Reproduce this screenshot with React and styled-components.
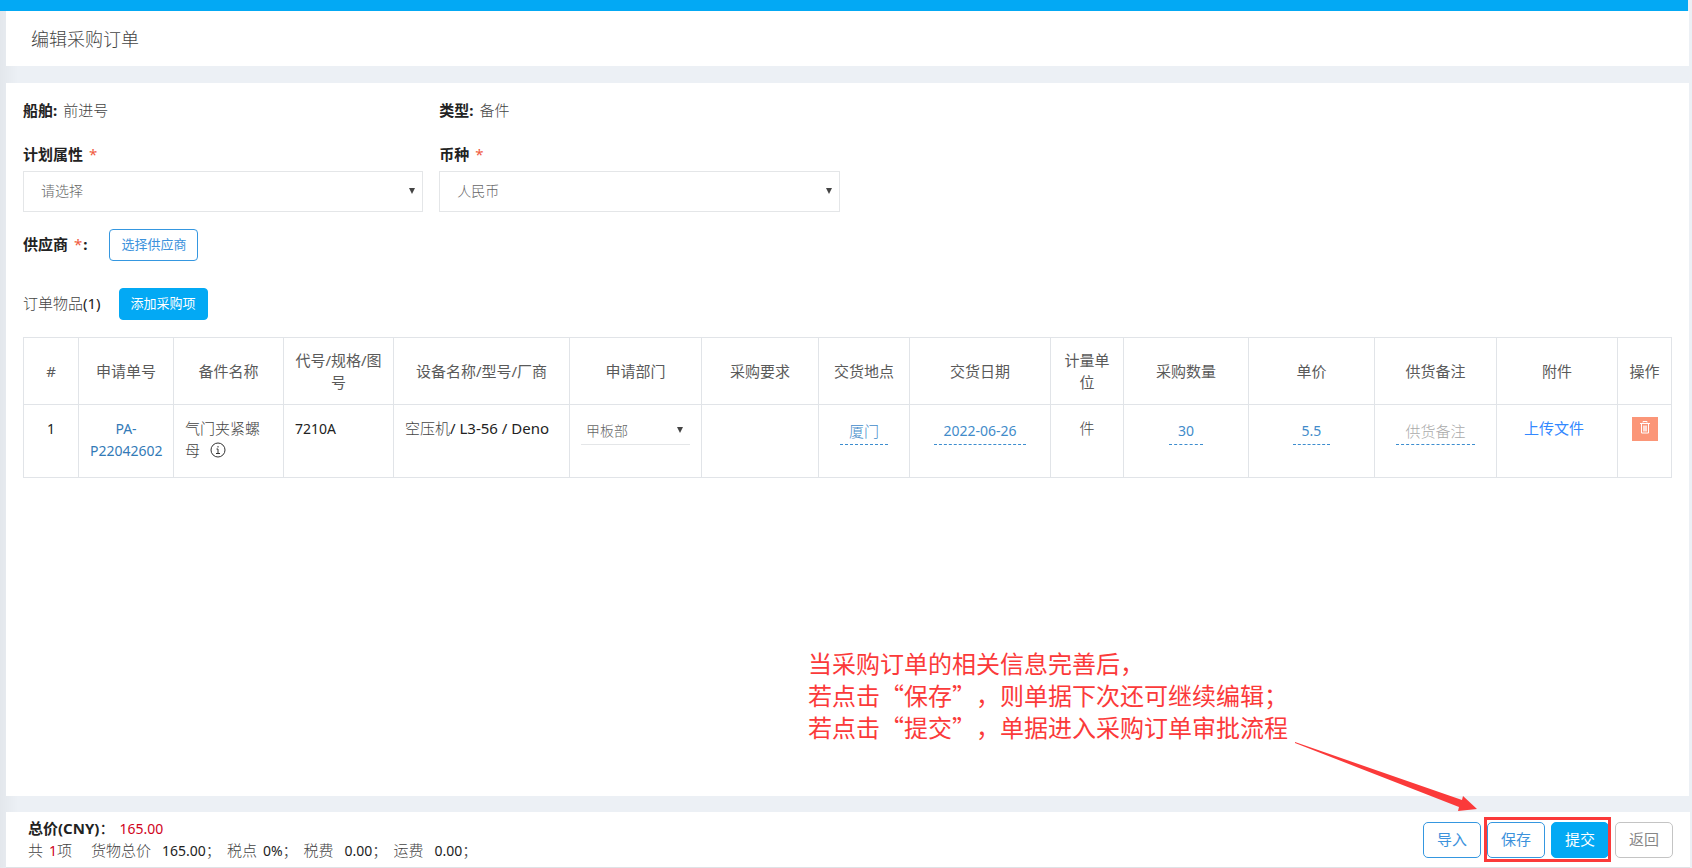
import React, { useState } from 'react';
import styled, { createGlobalStyle, css } from 'styled-components';

const GlobalStyle = createGlobalStyle`
  *, *::before, *::after { box-sizing: border-box; }
  body {
    margin: 0;
    background: #ecf0f5;
    color: #222;
    font-family: "Noto Sans", "Noto Sans CJK SC", sans-serif;
    font-size: 15px;
    line-height: 22px;
  }
  button, select, input { font-family: inherit; }
`;

const Page = styled.div`
  position: relative;
  display: flex;
  flex-direction: column;
  min-height: 100vh;
  padding-left: 6px;
  background: linear-gradient(to right, #e3e7ec, #ecf0f5 18px);
`;

const TopBar = styled.div`
  height: 11px;
  margin: 0 4px 0 -6px;
  background: #03a9f4;
`;

const TitleBar = styled.header`
  margin-right: 3px;
  padding: 17px 25px 16px;
  background: #fff;
`;

const Title = styled.h1`
  margin: 0;
  color: #444;
  font-size: 18px;
  line-height: 22px;
  font-weight: 300;
`;

const Card = styled.main`
  flex: 1;
  margin: 17px 3px 16px 0;
  padding: 16px 17px;
  background: #fff;
`;

const FieldGrid = styled.div`
  display: grid;
  grid-template-columns: repeat(4, 1fr);
  column-gap: 16px;
  margin-top: ${(p) => p.$top || 0};
`;

const Cjk = styled.span`
  color: #444;
  font-weight: 300;
`;

const Strong = styled.strong`
  margin-right: 2px;
  font-weight: 700;
`;

const Num = styled.span`
  font-size: 14px;
  line-height: 1;
  color: ${(p) => (p.$red ? '#d0021b' : 'inherit')};
`;

const Star = styled.span`
  margin: 0 1px 0 2px;
  color: #f05a40;
  font-weight: 400;
`;

const Field = styled.div`
  display: flex;
  flex-direction: column;
  gap: 6px;
`;

const Label = styled.label`
  font-weight: 700;
`;

const SelectBox = styled.div`
  position: relative;

  &::after {
    content: '';
    position: absolute;
    right: ${(p) => (p.$inline ? '7px' : '8px')};
    top: calc(50% - 4px);
    border: 3px solid transparent;
    border-top: 6px solid #444;
    border-bottom: 0;
    pointer-events: none;
  }
`;

const Select = styled.select`
  display: block;
  width: 100%;
  appearance: none;
  background: #fff;
  color: #666;
  font-size: 14px;
  font-weight: 300;
  border: 1px solid #e4e6e8;
  border-radius: 0;
  height: 41px;
  padding: 0 17px 2px;
  ${(p) =>
    p.$inline &&
    css`
      height: 28px;
      border-width: 0 0 1px;
      padding: 0 5px;
    `}
`;

const Line = styled.div`
  display: flex;
  align-items: center;
  gap: ${(p) => p.$gap};
  margin-top: ${(p) => p.$top};
`;

const LineText = styled.span`
  padding-bottom: 3px;
`;

const Button = styled.button`
  height: ${(p) => (p.$large ? '36px' : '32px')};
  padding: 0 ${(p) => (p.$large ? '13px' : '11px')} ${(p) => (p.$large ? '1px' : '3px')};
  font-size: ${(p) => (p.$large ? '15px' : '13px')};
  line-height: 20px;
  border: 1px solid #3597e0;
  border-radius: ${(p) => (p.$large ? '5px' : '4px')};
  background: #fff;
  color: #3c92dc;
  white-space: nowrap;
  ${(p) =>
    p.$kind === 'primary' &&
    css`
      border-color: #03a9f4;
      background: #03a9f4;
      color: #fff;
    `}
  ${(p) =>
    p.$kind === 'muted' &&
    css`
      border-color: #c4c4c4;
      color: #888;
    `}
`;

const Table = styled.table`
  width: 100%;
  margin-top: 17px;
  table-layout: fixed;
  border-collapse: collapse;
`;

const Col = styled.col`
  width: ${(p) => p.$w}px;
`;

const Th = styled.th`
  height: 67px;
  padding: 0 9px;
  border: 1px solid #e1e4e8;
  color: #5a5a5a;
  font-weight: 400;
  vertical-align: middle;
`;

const Td = styled.td`
  height: 73px;
  padding: 12px 11px 0;
  border: 1px solid #e1e4e8;
  vertical-align: top;
  text-align: ${(p) => p.$align || 'center'};
`;

const Link = styled.a`
  color: #337ab7;
  font-size: 14px;
  line-height: 1;
  text-decoration: none;
`;

const UploadLink = styled.a`
  margin-right: 6px;
  color: #3388ff;
  text-decoration: none;
`;

const Editable = styled.a`
  display: inline-block;
  height: 28px;
  padding: 3px 9px 0;
  border-bottom: 1px dashed #3c8dcf;
  color: ${(p) => (p.$empty ? '#aaa' : '#428bca')};
  font-size: ${(p) => (p.$cjk ? '15px' : '14px')};
  font-weight: ${(p) => (p.$cjk ? 300 : 400)};
  text-decoration: none;
`;

const InfoIcon = styled.svg`
  margin-left: 10px;
  vertical-align: -2px;
`;

const DeleteButton = styled.button`
  display: inline-flex;
  justify-content: center;
  width: 26px;
  height: 24px;
  padding: 4px 0 0;
  border: 0;
  background: #fb9678;
`;

const Footer = styled.footer`
  display: flex;
  justify-content: space-between;
  align-items: center;
  height: 56px;
  margin-right: 2px;
  padding: 0 17px 0 22px;
  border-bottom: 1px solid #dfe2e6;
  background: #fff;
`;

const Totals = styled.div`
  display: flex;
  flex-direction: column;
  padding-bottom: 2px;
`;

const TotalLine = styled.div`
  display: flex;
  align-items: baseline;
`;

const Item = styled.span`
  display: inline-flex;
  align-items: baseline;
  gap: ${(p) => p.$gap || '11px'};
  margin-right: ${(p) => p.$after || '6px'};
`;

const Actions = styled.div`
  display: flex;
  gap: 6px;
`;

const Marked = styled.div`
  position: relative;
  display: flex;
  gap: 6px;

  &::after {
    content: '';
    position: absolute;
    inset: -5px -2px -4px -3px;
    border: 3px solid #fb3a3a;
    pointer-events: none;
  }
`;

const Note = styled.p`
  position: absolute;
  right: 404px;
  bottom: 125px;
  margin: 0;
  color: #fb3a3a;
  font-family: "Noto Sans CJK SC", sans-serif;
  font-size: 24px;
  line-height: 32px;
  text-spacing-trim: space-all;
  white-space: nowrap;
`;

const Arrow = styled.svg`
  position: absolute;
  right: 214px;
  bottom: 56px;
  pointer-events: none;
`;

const columns = [
  ['#', 55], ['申请单号', 95], ['备件名称', 110], ['代号/规格/图号', 110],
  ['设备名称/型号/厂商', 176], ['申请部门', 132], ['采购要求', 117],
  ['交货地点', 91], ['交货日期', 141], ['计量单位', 73], ['采购数量', 125],
  ['单价', 126], ['供货备注', 122], ['附件', 121], ['操作', 54],
];

export default function App() {
  const [plan, setPlan] = useState('');
  const [currency, setCurrency] = useState('cny');
  const [dept, setDept] = useState('deck');

  return (
    <>
      <GlobalStyle />
      <Page lang="zh-CN">
        <TopBar />
        <TitleBar>
          <Title>编辑采购订单</Title>
        </TitleBar>

        <Card>
          <FieldGrid>
            <div><Strong>船舶:</Strong> <Cjk>前进号</Cjk></div>
            <div><Strong>类型:</Strong> <Cjk>备件</Cjk></div>
          </FieldGrid>
          <FieldGrid $top="22px">
            <Field>
              <Label htmlFor="plan">计划属性 <Star>*</Star></Label>
              <SelectBox>
                <Select id="plan" value={plan} onChange={(e) => setPlan(e.target.value)}>
                  <option value="">请选择</option>
                </Select>
              </SelectBox>
            </Field>
            <Field>
              <Label htmlFor="currency">币种 <Star>*</Star></Label>
              <SelectBox>
                <Select id="currency" value={currency} onChange={(e) => setCurrency(e.target.value)}>
                  <option value="cny">人民币</option>
                </Select>
              </SelectBox>
            </Field>
          </FieldGrid>

          <Line $top="17px" $gap="20px">
            <LineText><Strong>供应商 <Star>*</Star>:</Strong></LineText>
            <Button type="button">选择供应商</Button>
          </Line>
          <Line $top="27px" $gap="18px">
            <LineText><Cjk>订单物品</Cjk>(1)</LineText>
            <Button type="button" $kind="primary">添加采购项</Button>
          </Line>

          <Table>
            <colgroup>
              {columns.map(([name, w]) => <Col key={name} $w={w} />)}
            </colgroup>
            <thead>
              <tr>{columns.map(([name]) => <Th key={name} scope="col">{name}</Th>)}</tr>
            </thead>
            <tbody>
              <tr>
                <Td><Num>1</Num></Td>
                <Td><Link href="#order">PA-<br />P22042602</Link></Td>
                <Td $align="left">
                  <Cjk>气门夹紧螺母</Cjk>
                  <InfoIcon width="16" height="16" viewBox="0 0 16 16" fill="none" stroke="#333">
                    <circle cx="8" cy="8" r="7" />
                    <path d="M8 4v1.5M6.5 7H8v4.5M6 11.5h4" />
                  </InfoIcon>
                </Td>
                <Td $align="left"><Num>7210A</Num></Td>
                <Td $align="left"><Cjk>空压机</Cjk>/ L3-56 / Deno</Td>
                <Td>
                  <SelectBox $inline>
                    <Select $inline aria-label="申请部门" value={dept} onChange={(e) => setDept(e.target.value)}>
                      <option value="deck">甲板部</option>
                    </Select>
                  </SelectBox>
                </Td>
                <Td />
                <Td><Editable href="#place" $cjk>厦门</Editable></Td>
                <Td><Editable href="#date">2022-06-26</Editable></Td>
                <Td><Cjk>件</Cjk></Td>
                <Td><Editable href="#qty">30</Editable></Td>
                <Td><Editable href="#price">5.5</Editable></Td>
                <Td><Editable href="#remark" $cjk $empty>供货备注</Editable></Td>
                <Td><UploadLink href="#upload">上传文件</UploadLink></Td>
                <Td>
                  <DeleteButton type="button" aria-label="删除">
                    <svg width="12" height="13" viewBox="0 0 12 13" fill="none" stroke="#fff">
                      <path d="M1 2.5h10M4 1.5V.5h4v1M2.5 3v9h7V3" />
                      <path d="M4 4.500h4v6H4z" fill="#fff" fillOpacity=".7" stroke="none" />
                    </svg>
                  </DeleteButton>
                </Td>
              </tr>
            </tbody>
          </Table>
        </Card>

        <Footer>
          <Totals>
            <TotalLine>
              <Item $gap="5px">
                <span><b>总价(CNY)</b>：</span>
                <Num $red>165.00</Num>
              </Item>
            </TotalLine>
            <TotalLine>
              <Item $gap="6px" $after="19px">
                <Cjk>共</Cjk>
                <span><Num $red>1</Num><Cjk>项</Cjk></span>
              </Item>
              <Item><Cjk>货物总价</Cjk><span><Num>165.00</Num><Cjk>；</Cjk></span></Item>
              <Item $gap="6px"><Cjk>税点</Cjk><span><Num>0%</Num><Cjk>；</Cjk></span></Item>
              <Item><Cjk>税费</Cjk><span><Num>0.00</Num><Cjk>；</Cjk></span></Item>
              <Item><Cjk>运费</Cjk><span><Num>0.00</Num><Cjk>；</Cjk></span></Item>
            </TotalLine>
          </Totals>
          <Actions>
            <Button type="button" $large>导入</Button>
            <Marked>
              <Button type="button" $large>保存</Button>
              <Button type="button" $large $kind="primary">提交</Button>
            </Marked>
            <Button type="button" $large $kind="muted">返回</Button>
          </Actions>
        </Footer>

        <Note>
          当采购订单的相关信息完善后，<br />
          若点击“保存”，则单据下次还可继续编辑；<br />
          若点击“提交”，单据进入采购订单审批流程
        </Note>
        <Arrow width="184" height="72" viewBox="0 0 184 72" fill="#fb3a3a" aria-hidden="true">
          <path d="M1 2L168 60L169 56L183 69L164 71L165 67L1 3Z" />
        </Arrow>
      </Page>
    </>
  );
}
